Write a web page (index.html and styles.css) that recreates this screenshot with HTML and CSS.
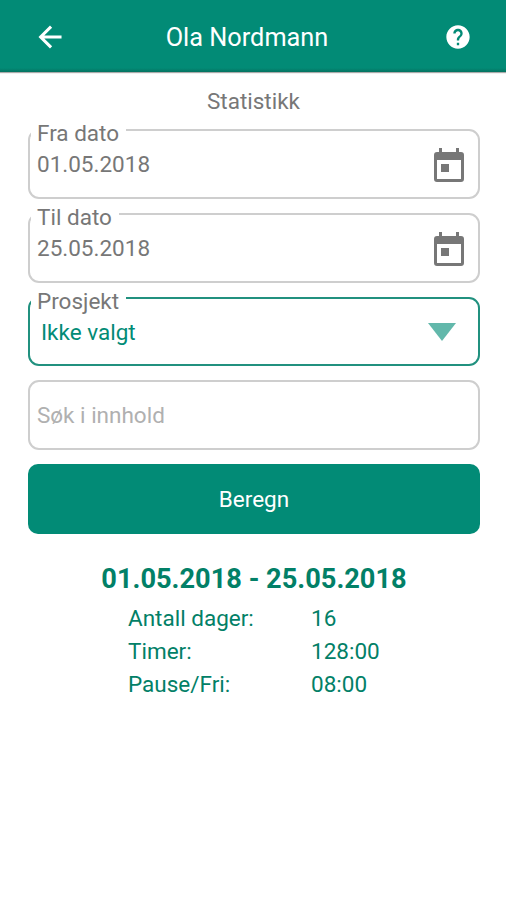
FILE: index.html
```html
<!DOCTYPE html>
<html lang="no">
<head>
<meta charset="utf-8">
<title>Statistikk</title>
<link rel="stylesheet" href="styles.css">
</head>
<body>
<header class="bar">
  <svg class="back" viewBox="0 0 24 24"><path d="M5.500 12H19.500M12 5l-7 7 7 7"/></svg>
  <h1>Ola Nordmann</h1>
  <svg class="help" viewBox="0 0 24 24"><path d="M12 2C6.48 2 2 6.48 2 12s4.48 10 10 10 10-4.480 10-10S17.520 2 12 2zm1 17h-2v-2h2v2zm2.070-7.750l-.9.920C13.450 12.900 13 13.500 13 15h-2v-.5c0-1.100.450-2.100 1.170-2.830l1.240-1.260c.370-.360.590-.860.590-1.410 0-1.100-.9-2-2-2s-2 .9-2 2H8c0-2.210 1.790-4 4-4s4 1.790 4 4c0 .880-.360 1.680-.930 2.250z"/></svg>
</header>
<main class="page">
  <h2 class="heading">Statistikk</h2>
  <fieldset class="field">
    <legend>Fra dato</legend>
    <span class="value">01.05.2018</span>
    <svg class="calendar" viewBox="0 0 30 34"><path fill-rule="evenodd" d="M5 0h3v4h14V0h3v4h2a3 3 0 0 1 3 3v24a3 3 0 0 1-3 3H3a3 3 0 0 1-3-3V7a3 3 0 0 1 3-3h2zM3 12v19h24V12zM7 16h8v8H7z"/></svg>
  </fieldset>
  <fieldset class="field">
    <legend>Til dato</legend>
    <span class="value">25.05.2018</span>
    <svg class="calendar" viewBox="0 0 30 34"><path fill-rule="evenodd" d="M5 0h3v4h14V0h3v4h2a3 3 0 0 1 3 3v24a3 3 0 0 1-3 3H3a3 3 0 0 1-3-3V7a3 3 0 0 1 3-3h2zM3 12v19h24V12zM7 16h8v8H7z"/></svg>
  </fieldset>
  <fieldset class="field select">
    <legend>Prosjekt</legend>
    <span class="value">Ikke valgt</span>
    <svg class="arrow" viewBox="0 0 28 18"><path d="M0 0h28L14 18z"/></svg>
  </fieldset>
  <div class="search">Søk i innhold</div>
  <button class="submit">Beregn</button>
  <h3 class="period">01.05.2018 - 25.05.2018</h3>
  <dl class="totals">
    <dt>Antall dager:</dt><dd>16</dd>
    <dt>Timer:</dt><dd>128:00</dd>
    <dt>Pause/Fri:</dt><dd>08:00</dd>
  </dl>
</main>
</body>
</html>
```
FILE: styles.css
```css
* { box-sizing: border-box; }
body { margin: 0; height: 900px; background: #fff; font: 22.5px/28px Roboto, sans-serif; color: #777; }
h1, h2, h3, dl, dd { margin: 0; font: inherit; }
.bar { display: grid; grid-template-columns: 32px 1fr 28px; align-items: center; height: 72px; padding: 2px 34px 0 33px; background: linear-gradient(#028b76 68px, #047260 72px); box-shadow: 0 1px 1px #0005; color: #fff; }
.bar h1 { text-align: center; font-size: 25.300px; padding: 2px 15px 0 0; }
.back { width: 32px; height: 32px; margin-left: 1px; fill: none; stroke: #fff; stroke-width: 2.300; stroke-linecap: square; }
.help { width: 28px; height: 28px; fill: #fff; }
.page { padding: 15px 26px 0 28px; }
.heading { text-align: center; height: 28px; padding-right: 1px; }
.field { display: flex; align-items: center; justify-content: space-between; height: 84px; margin: 0; padding: 0 14px 13px 9px; border: 2px solid #cecece; border-radius: 11px; min-width: 0; }
.field legend { margin-left: -8px; padding: 6px 7px 0 6px; line-height: 24px; background: #fff; }
.field .value { padding-bottom: 1px; margin-left: -2px; }
.calendar { width: 30px; height: 34px; fill: #777; }
.select { height: 83px; border-color: #21917f; padding-right: 22px; }
.select .value { color: #028b76; padding-left: 4px; }
.arrow { width: 28px; height: 18px; fill: #62b8ab; }
.search { height: 70px; margin-top: 14px; padding: 19px 7px; border: 2px solid #cecece; border-radius: 11px; color: #b0b0b0; }
.submit { display: block; width: 100%; height: 70px; margin-top: 14px; padding: 0; border: 0; border-radius: 10px; background: #028b76; color: #fff; font: inherit; }
.period { margin-top: 31px; text-align: center; font-size: 27.200px; font-weight: 700; color: #028067; }
.totals { display: grid; grid-template-columns: 183px 1fr; margin: 9px 0 0 100px; line-height: 33px; color: #028067; }
```
